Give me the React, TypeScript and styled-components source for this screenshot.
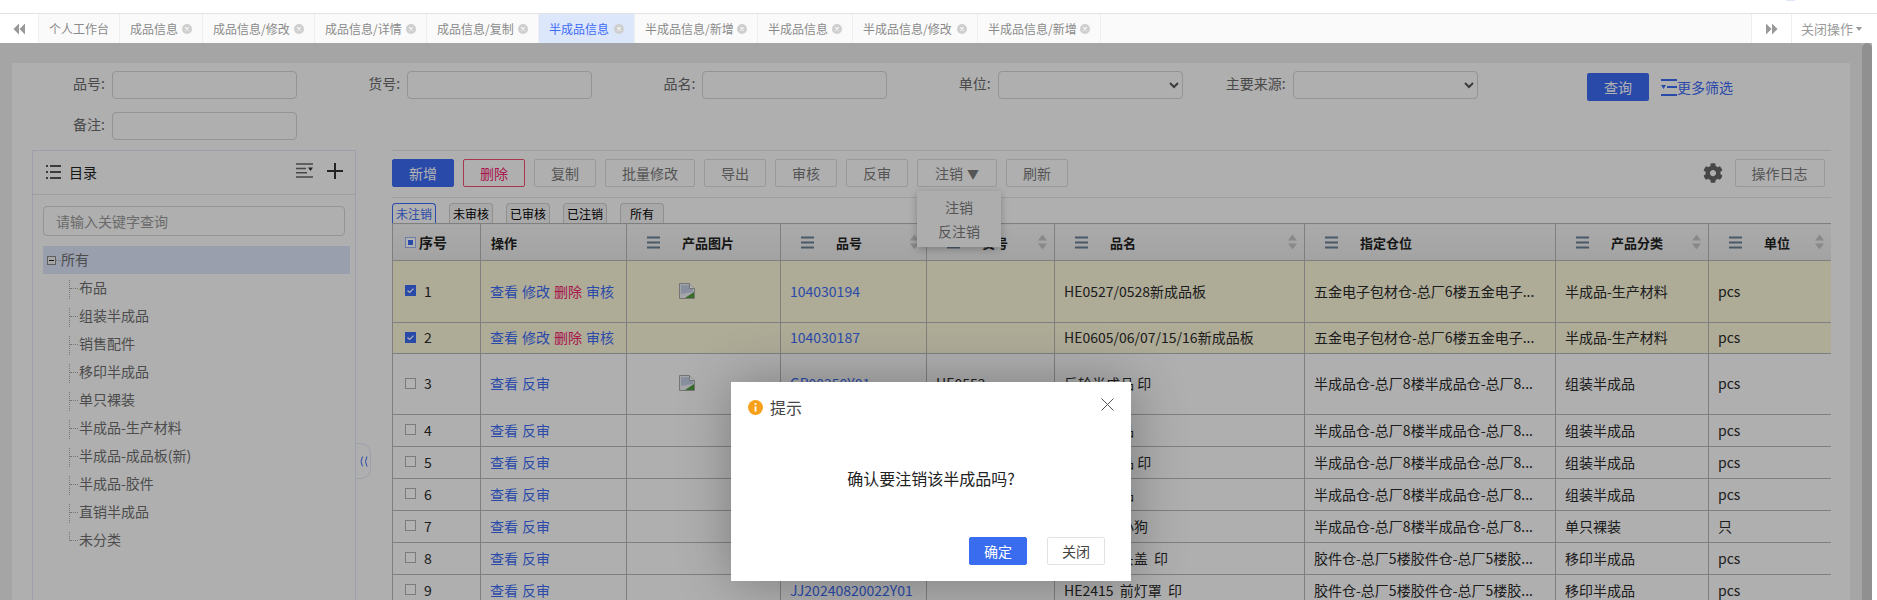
import styled, { createGlobalStyle } from "styled-components";
import { FaCog } from "react-icons/fa";

type Row = {
  no: number;
  height: number;
  checked?: boolean;
  hasImage?: boolean;
  actions: string[];
  code: string;
  article: string;
  name: string;
  location: string;
  category: string;
  unit: string;
};

const tabs = [
  { label: "个人工作台", width: 81, fixed: true },
  { label: "成品信息", width: 83 },
  { label: "成品信息/修改", width: 112 },
  { label: "成品信息/详情", width: 112 },
  { label: "成品信息/复制", width: 112 },
  { label: "半成品信息", width: 96, active: true },
  { label: "半成品信息/新增", width: 123 },
  { label: "半成品信息", width: 95 },
  { label: "半成品信息/修改", width: 125 },
  { label: "半成品信息/新增", width: 123 },
];

const treeItems = ["布品", "组装半成品", "销售配件", "移印半成品", "单只裸装", "半成品-生产材料", "半成品-成品板(新)", "半成品-胶件", "直销半成品", "未分类"];
const toolButtons = ["复制", "批量修改", "导出", "审核", "反审"];
const statusTabs = ["未注销", "未审核", "已审核", "已注销", "所有"];

const metalStore = "五金电子包材仓-总厂6楼五金电子...";
const semiStore = "半成品仓-总厂8楼半成品仓-总厂8...";
const glueStore = "胶件仓-总厂5楼胶件仓-总厂5楼胶...";
const fullActions = ["查看", "修改", "删除", "审核"];
const backActions = ["查看", "反审"];

const rows: Row[] = [
  { no: 1, height: 62, checked: true, hasImage: true, actions: fullActions, code: "104030194", article: "", name: "HE0527/0528新成品板", location: metalStore, category: "半成品-生产材料", unit: "pcs" },
  { no: 2, height: 31, checked: true, actions: fullActions, code: "104030187", article: "", name: "HE0605/06/07/15/16新成品板", location: metalStore, category: "半成品-生产材料", unit: "pcs" },
  { no: 3, height: 61, hasImage: true, actions: backActions, code: "GP00250Y01", article: "HE0552", name: "反轮半成品 印", location: semiStore, category: "组装半成品", unit: "pcs" },
  { no: 4, height: 32, actions: backActions, code: "GP00251Y01", article: "HE0552", name: "反轮半成品", location: semiStore, category: "组装半成品", unit: "pcs" },
  { no: 5, height: 32, actions: backActions, code: "GP00252Y01", article: "HE0553", name: "反轮半成品 印", location: semiStore, category: "组装半成品", unit: "pcs" },
  { no: 6, height: 32, actions: backActions, code: "GP00253Y01", article: "HE0553", name: "反轮半成品", location: semiStore, category: "组装半成品", unit: "pcs" },
  { no: 7, height: 32, actions: backActions, code: "GP00254Y01", article: "HE0554", name: "反轮半成小狗", location: semiStore, category: "单只裸装", unit: "只" },
  { no: 8, height: 32, actions: backActions, code: "JJ20240820021Y01", article: "", name: "HE2415  头盖  印", location: glueStore, category: "移印半成品", unit: "pcs" },
  { no: 9, height: 32, actions: backActions, code: "JJ20240820022Y01", article: "", name: "HE2415  前灯罩  印", location: glueStore, category: "移印半成品", unit: "pcs" },
];

const columns = [
  { title: "产品图片", width: 154 },
  { title: "品号", width: 146, sortable: true },
  { title: "货号", width: 128, sortable: true },
  { title: "品名", width: 250, sortable: true },
  { title: "指定仓位", width: 251 },
  { title: "产品分类", width: 153, sortable: true },
  { title: "单位", width: 122, sortable: true },
];

export default function App() {
  return (
    <Page>
      <GlobalStyle />
      <TopBar>
        <TopDot />
      </TopBar>

      <TabBar>
        <ArrowTab aria-label="prev">
          <DoubleArrow />
        </ArrowTab>
        {tabs.map((tab, i) => (
          <Tab key={i} $active={tab.active} $width={tab.width}>
            {tab.label}
            {!tab.fixed && <CloseDot />}
          </Tab>
        ))}
        <TabSpacer />
        <ArrowTab aria-label="next" $next>
          <DoubleArrow flip />
        </ArrowTab>
        <CloseMenu>
          关闭操作
          <Caret />
        </CloseMenu>
      </TabBar>

      <Body>
        <Main>
          <Panel>
            <SearchForm>
              <SearchGrid>
                <Field><FieldLabel>品号:</FieldLabel><TextInput /></Field>
                <Field><FieldLabel>货号:</FieldLabel><TextInput /></Field>
                <Field><FieldLabel>品名:</FieldLabel><TextInput /></Field>
                <Field><FieldLabel>单位:</FieldLabel><SelectInput><option /></SelectInput></Field>
                <Field><FieldLabel>主要来源:</FieldLabel><SelectInput><option /></SelectInput></Field>
                <Field><FieldLabel>备注:</FieldLabel><TextInput /></Field>
              </SearchGrid>
              <QueryButton>查询</QueryButton>
              <MoreFilter>
                <MoreIcon />
                更多筛选
              </MoreFilter>
            </SearchForm>

            <Content>
              <Sidebar>
                <SidebarHead>
                  <ListIcon />
                  <SidebarTitle>目录</SidebarTitle>
                  <SortLinesIcon />
                  <PlusIcon />
                </SidebarHead>
                <TreeSearch placeholder="请输入关键字查询" />
                <Tree>
                  <TreeRoot>
                    <Expander />
                    <RootDots />
                    <RootLabel>所有</RootLabel>
                  </TreeRoot>
                  {treeItems.map((item, i) => (
                    <TreeItem key={item} $last={i === treeItems.length - 1}>{item}</TreeItem>
                  ))}
                </Tree>
                <CollapseHandle>
                  <CollapseIcon />
                </CollapseHandle>
              </Sidebar>

              <TableArea>
                <Toolbar>
                  <ToolButton $variant="primary">新增</ToolButton>
                  <ToolButton $variant="danger">删除</ToolButton>
                  {toolButtons.map((label) => (
                    <ToolButton key={label} $wide={label.length > 2}>{label}</ToolButton>
                  ))}
                  <DropdownWrap>
                    <ToolButton $menu>注销<MenuTriangle>▼</MenuTriangle></ToolButton>
                    <DropdownMenu>
                      <DropdownItem>注销</DropdownItem>
                      <DropdownItem>反注销</DropdownItem>
                    </DropdownMenu>
                  </DropdownWrap>
                  <ToolButton>刷新</ToolButton>
                  <ToolbarRight>
                    <GearButton><FaCog size={20} /></GearButton>
                    <ToolButton $wide>操作日志</ToolButton>
                  </ToolbarRight>
                </Toolbar>

                <StatusTabs>
                  {statusTabs.map((label, i) => (
                    <StatusTab key={label} $active={i === 0}>{label}</StatusTab>
                  ))}
                </StatusTabs>

                <DataTable>
                  <colgroup>
                    <col width={88} />
                    <col width={146} />
                    {columns.map((c) => <col key={c.title} width={c.width} />)}
                  </colgroup>
                  <thead>
                    <tr>
                      <HeadCell>
                        <NoHead>
                          <CheckBox $state="some" />
                          序号
                        </NoHead>
                      </HeadCell>
                      <HeadCell><ActionHead>操作</ActionHead></HeadCell>
                      {columns.map((c) => (
                        <HeadCell key={c.title}>
                          <HeadInner>
                            <MenuBars />
                            {c.title}
                            {c.sortable && <SortArrows />}
                          </HeadInner>
                        </HeadCell>
                      ))}
                    </tr>
                  </thead>
                  <tbody>
                    {rows.map((row) => (
                      <DataRow key={row.no} $checked={row.checked}>
                        <Cell style={{ height: row.height }}>
                          <NoCell>
                            <CheckBox $state={row.checked ? "on" : "off"}>
                              {row.checked && <CheckMark />}
                            </CheckBox>
                            {row.no}
                          </NoCell>
                        </Cell>
                        <Cell>
                          <Actions>
                            {row.actions.map((a) => (
                              <ActionLink key={a} $danger={a === "删除"}>{a}</ActionLink>
                            ))}
                          </Actions>
                        </Cell>
                        <Cell>{row.hasImage && <ImageSlot><BrokenImage /></ImageSlot>}</Cell>
                        <Cell><CodeLink>{row.code}</CodeLink></Cell>
                        <Cell>{row.article}</Cell>
                        <Cell>{row.name}</Cell>
                        <Cell>{row.location}</Cell>
                        <Cell>{row.category}</Cell>
                        <LastCell>{row.unit}</LastCell>
                      </DataRow>
                    ))}
                  </tbody>
                </DataTable>
              </TableArea>
            </Content>
          </Panel>
        </Main>
        <ScrollThumb />
        <Overlay />
        <Dialog>
          <DialogHead>
            <InfoIcon />
            <DialogTitle>提示</DialogTitle>
            <DialogClose />
          </DialogHead>
          <DialogBody>确认要注销该半成品吗?</DialogBody>
          <DialogFoot>
            <DialogButton $primary>确定</DialogButton>
            <DialogButton>关闭</DialogButton>
          </DialogFoot>
        </Dialog>
      </Body>
    </Page>
  );
}

/* иконки */

const DoubleArrow = ({ flip }: { flip?: boolean }) => (
  <svg width="12" height="12" viewBox="0 0 12 12" style={flip ? { transform: "scaleX(-1)" } : undefined}>
    <path d="M6 0.5 L0.5 6 L6 11.5 Z M12 0.5 L6.5 6 L12 11.5 Z" fill="#999" />
  </svg>
);

const CloseDot = () => (
  <svg width="10" height="10" viewBox="0 0 10 10">
    <circle cx="5" cy="5" r="5" fill="#cfcfcf" />
    <path d="M3.4 3.4 L6.6 6.6 M6.6 3.4 L3.4 6.6" stroke="#fff" strokeWidth="1.1" />
  </svg>
);

const MoreIcon = () => (
  <svg width="16" height="17" viewBox="0 0 16 17">
    <path d="M0 1 H16 M0 16 H16 M6 8 H16" stroke="#3c6bf3" strokeWidth="2" fill="none" />
    <path d="M0 6 H5 L2.5 10 Z" fill="#3c6bf3" />
  </svg>
);

const ListIcon = () => (
  <svg width="15" height="14" viewBox="0 0 15 14">
    <path d="M0 1 H2 M4 1 H15 M0 7 H2 M4 7 H15 M0 13 H2 M4 13 H15" stroke="#222" strokeWidth="1.4" />
  </svg>
);

const SortLinesIcon = () => (
  <svg width="17" height="15" viewBox="0 0 17 15">
    <path d="M0 1 H17 M0 14 H17 M0 5.5 H10 M0 9.8 H11" stroke="#666" strokeWidth="1.5" />
    <path d="M12 4.5 H17 L14.5 8 Z" fill="#333" />
  </svg>
);

const PlusIcon = () => (
  <svg width="16" height="16" viewBox="0 0 16 16">
    <path d="M0 8 H16 M8 0 V16" stroke="#333" strokeWidth="2" />
  </svg>
);

const CollapseIcon = () => (
  <svg width="9" height="11" viewBox="0 0 9 11">
    <path d="M3.5 0.5 Q0.5 5.5 3.5 10.5 M8 0.5 Q5 5.5 8 10.5" stroke="#3c6bf3" strokeWidth="1" fill="none" />
  </svg>
);

const MenuBars = () => (
  <svg width="13" height="13" viewBox="0 0 13 13">
    <path d="M0 1.5 H13 M0 6.5 H13 M0 11.5 H13" stroke="#6b8096" strokeWidth="2.2" />
  </svg>
);

const SortArrows = () => (
  <SortWrap>
    <svg width="9" height="15" viewBox="0 0 9 15">
      <path d="M4.5 0 L9 6 H0 Z M4.5 15 L9 9 H0 Z" fill="#c4c4c4" />
    </svg>
  </SortWrap>
);

const CheckMark = () => (
  <svg width="9" height="9" viewBox="0 0 9 9">
    <path d="M1.5 4.5 L3.7 6.4 L7.5 2.6" stroke="#fff" strokeWidth="1.2" fill="none" />
  </svg>
);

const BrokenImage = () => (
  <svg width="16" height="16" viewBox="0 0 16 16">
    <path d="M0.5 0.5 H10.5 L15.5 5.5 V15.5 H0.5 Z" fill="#eceef2" stroke="#a8a8a8" />
    <path d="M2 2 H10 L14 6 V9 L2 11 Z" fill="#c3cfe4" />
    <path d="M6 15 L15 9 V15 Z" fill="#4f9a3c" />
    <path d="M10.5 0.5 V5.5 H15.5" fill="#fff" stroke="#a8a8a8" />
  </svg>
);

const InfoIcon = () => (
  <svg width="15" height="15" viewBox="0 0 15 15">
    <circle cx="7.5" cy="7.5" r="7.5" fill="#f7a11b" />
    <path d="M7.5 6.4 V11.6" stroke="#fff" strokeWidth="1.8" />
    <circle cx="7.5" cy="4" r="1.1" fill="#fff" />
  </svg>
);

const DialogClose = () => (
  <CloseWrap>
    <svg width="13" height="13" viewBox="0 0 13 13">
      <path d="M0.5 0.5 L12.5 12.5 M12.5 0.5 L0.5 12.5" stroke="#555" strokeWidth="1" />
    </svg>
  </CloseWrap>
);

/* стили */

const GlobalStyle = createGlobalStyle`
  * {
    box-sizing: border-box;
  }

  html, body {
    margin: 0;
    padding: 0;
    background: #fff;
  }

  body {
    font-family: "Noto Sans CJK SC", "Liberation Sans", sans-serif;
    font-size: 14px;
    color: #333;
  }
`;

const Page = styled.div`
  width: 1877px;
  height: 600px;
  display: flex;
  flex-direction: column;
  overflow: hidden;
  background: #fff;
`;

const TopBar = styled.div`
  height: 13px;
  display: flex;
  justify-content: flex-end;
  padding-right: 82px;
  background: #fff;
`;

const TopDot = styled.div`
  width: 9px;
  height: 1px;
  background: #dfe6fa;
`;

const TabBar = styled.div`
  height: 30px;
  display: flex;
  background: #fafafa;
  border-top: 1px solid #e2e2e2;
  font-size: 12px;
  line-height: 29px;
  color: #8a8a8a;
`;

const ArrowTab = styled.div<{ $next?: boolean }>`
  width: ${(p) => (p.$next ? "41px" : "39px")};
  display: flex;
  align-items: center;
  justify-content: center;
  background: #fff;
  border-right: 1px solid #eee;
  border-left: ${(p) => (p.$next ? "1px solid #eee" : "none")};
`;

const Tab = styled.div<{ $active?: boolean; $width: number }>`
  width: ${(p) => p.$width}px;
  display: flex;
  align-items: center;
  justify-content: space-between;
  padding: 0 10px;
  border-right: 1px solid #eee;
  white-space: nowrap;
  background: ${(p) => (p.$active ? "#dde7fb" : "transparent")};
  color: ${(p) => (p.$active ? "#3c6bf3" : "#8a8a8a")};
`;

const TabSpacer = styled.div`
  flex: 1;
`;

const CloseMenu = styled.div`
  width: 85px;
  display: flex;
  align-items: center;
  gap: 3px;
  padding-left: 9px;
  font-size: 13px;
  color: #9a9a9a;
  background: #fff;
`;

const Caret = styled.span`
  width: 0;
  height: 0;
  border-left: 3.5px solid transparent;
  border-right: 3.5px solid transparent;
  border-top: 4px solid #999;
`;

const Body = styled.div`
  position: relative;
  flex: 1;
  display: flex;
  min-height: 0;
`;

const Main = styled.div`
  width: 1862px;
  height: 557px;
  padding: 20px 12px 0;
  background: #ececec;
  overflow: hidden;
`;

const ScrollThumb = styled.div`
  width: 10px;
  background: #cfcfcf;
  border-radius: 5px 5px 0 0;
`;

const Overlay = styled.div`
  position: absolute;
  left: 0;
  top: 0;
  z-index: 5;
  width: 1872px;
  height: 100%;
  background: rgba(0, 0, 0, 0.3);
`;

const Panel = styled.div`
  width: 1838px;
  min-height: 537px;
  background: #fbfbfb;
`;

const SearchForm = styled.div`
  display: flex;
  align-items: flex-start;
  padding: 8px 0 0;
`;

const SearchGrid = styled.div`
  display: grid;
  grid-template-columns: repeat(5, 295.2px);
  row-gap: 13px;
`;

const Field = styled.div`
  display: flex;
  align-items: center;
  justify-content: flex-end;
  gap: 7px;
  height: 28px;
  width: 285px;
`;

const FieldLabel = styled.label`
  padding-bottom: 4px;
  font-size: 14px;
  color: #6a6a6a;
  white-space: nowrap;
`;

const TextInput = styled.input`
  width: 185px;
  height: 28px;
  background: transparent;
  border: 1px solid #d4d4d4;
  border-radius: 4px;
`;

const SelectInput = styled.select`
  width: 185px;
  height: 28px;
  background: transparent;
  border: 1px solid #d4d4d4;
  border-radius: 4px;
  color: #555;
`;

const QueryButton = styled.button`
  width: 62px;
  height: 28px;
  margin: 2px 0 0 99px;
  border: none;
  border-radius: 2px;
  background: #3c6bf3;
  color: #fff;
  font: inherit;
  font-size: 14px;
`;

const MoreFilter = styled.a`
  display: flex;
  align-items: center;
  height: 28px;
  margin: 2px 0 0 12px;
  font-size: 14px;
  color: #3c6bf3;
  white-space: nowrap;
`;

const Content = styled.div`
  display: flex;
  align-items: flex-start;
  gap: 36px;
  padding: 10px 20px 0;
`;

const Sidebar = styled.aside`
  position: relative;
  flex: 0 0 324px;
  min-width: 0;
  height: 500px;
  border: 1px solid #dfe6f5;
  padding: 0 10px;
`;

const SidebarHead = styled.div`
  display: flex;
  align-items: center;
  height: 44px;
  margin: 0 -10px;
  padding: 0 12px 2px 13px;
  border-bottom: 1px solid #e4e4e4;

  & > svg:last-child {
    margin-left: 14px;
    margin-top: -2px;
  }

  & > svg:nth-last-child(2) {
    margin-top: -2px;
  }
`;

const SidebarTitle = styled.span`
  flex: 1;
  margin-left: 8px;
  font-size: 14px;
  color: #222;
`;

const TreeSearch = styled.input`
  display: block;
  width: 302px;
  height: 30px;
  margin-top: 11px;
  padding: 0 12px;
  background: transparent;
  border: 1px solid #d4d4d4;
  border-radius: 4px;
  font: inherit;

  &::placeholder {
    color: #999;
  }
`;

const Tree = styled.div`
  margin-top: 10px;
  width: 307px;
  font-size: 14px;
  color: #6e6e6e;
`;

const TreeRoot = styled.div`
  height: 28px;
  display: flex;
  align-items: center;
  padding-left: 4px;
  background: #dde4fa;
`;

const RootLabel = styled.span`
  padding-bottom: 2px;
`;

const Expander = styled.span`
  position: relative;
  width: 9px;
  height: 9px;
  border: 1px solid #888;
  background: #eee;

  &::after {
    content: "";
    position: absolute;
    left: 1px;
    right: 1px;
    top: 3px;
    height: 1px;
    background: #222;
  }
`;

const RootDots = styled.span`
  width: 5px;
  margin-right: 0;
  border-top: 1px dotted #aaa;
`;

const TreeItem = styled.div<{ $last?: boolean }>`
  position: relative;
  height: 28px;
  line-height: 26px;
  padding-left: 36px;

  &::before {
    content: "";
    position: absolute;
    left: 26px;
    top: 6px;
    height: ${(p) => (p.$last ? "9px" : "19px")};
    border-left: 1px dotted #aaa;
  }

  &::after {
    content: "";
    position: absolute;
    left: 27px;
    top: 14px;
    width: 8px;
    border-top: 1px dotted #aaa;
  }
`;

const CollapseHandle = styled.div`
  position: absolute;
  right: -16px;
  top: 292px;
  width: 15px;
  height: 36px;
  display: flex;
  align-items: center;
  justify-content: center;
  background: #fbfbfb;
  border: 1px solid #dfe6f5;
  border-left: none;
  border-radius: 0 10px 10px 0;
`;

const TableArea = styled.div`
  flex: 0 0 1438px;
  border-top: 1px solid #e4e4e4;
`;

const Toolbar = styled.div`
  display: flex;
  align-items: center;
  gap: 9px;
  padding: 8px 6px 10px 0;
  border-bottom: 1px solid #e4e4e4;
`;

const ToolButton = styled.button<{ $variant?: "primary" | "danger"; $wide?: boolean; $menu?: boolean }>`
  width: ${(p) => (p.$menu ? "80px" : p.$wide ? "90px" : "62px")};
  height: 28px;
  padding: 0;
  font: inherit;
  font-size: 14px;
  border-radius: 2px;
  border: 1px solid
    ${(p) => (p.$variant === "primary" ? "#3c6bf3" : p.$variant === "danger" ? "#f0506e" : "#dcdcdc")};
  background: ${(p) => (p.$variant === "primary" ? "#3c6bf3" : "transparent")};
  color: ${(p) => (p.$variant === "primary" ? "#fff" : p.$variant === "danger" ? "#f2206e" : "#7a7a7a")};
`;

const MenuTriangle = styled.span`
  margin-left: 4px;
  font-size: 12px;
`;

const DropdownWrap = styled.div`
  position: relative;
  height: 28px;
`;

const DropdownMenu = styled.div`
  position: absolute;
  left: 0;
  top: 32px;
  z-index: 2;
  width: 84px;
  height: 56px;
  padding-top: 4px;
  background: #f8f8f8;
  box-shadow: 0 2px 8px rgba(0, 0, 0, 0.25);
`;

const DropdownItem = styled.div`
  height: 24px;
  line-height: 24px;
  text-align: center;
  font-size: 14px;
  color: #7a7a7a;
`;

const ToolbarRight = styled.div`
  margin-left: auto;
  display: flex;
  align-items: center;
  gap: 12px;
`;

const GearButton = styled.span`
  display: flex;
  color: #666;
`;

const StatusTabs = styled.div`
  display: flex;
  gap: 13px;
  height: 25px;
  padding-top: 5px;
`;

const StatusTab = styled.div<{ $active?: boolean }>`
  width: 44px;
  height: 20px;
  line-height: 19px;
  text-align: center;
  font-size: 12px;
  border: 1px solid ${(p) => (p.$active ? "#3c6bf3" : "#cfcfcf")};
  border-bottom: none;
  border-radius: 4px 4px 0 0;
  background: ${(p) => (p.$active ? "transparent" : "#f2f2f2")};
  color: ${(p) => (p.$active ? "#3c6bf3" : "#000")};
`;

const DataTable = styled.table`
  width: 1438px;
  table-layout: fixed;
  border-collapse: collapse;
  font-size: 14px;
`;

const HeadCell = styled.th`
  height: 37px;
  padding: 0;
  text-align: left;
  font-size: 13px;
  font-weight: 700;
  color: #222;
  border: 1px solid #b6b6b6;
  background: linear-gradient(to bottom, #f4f4f4, #e9e9e9);

  &:last-child {
    border-right: none;
  }
`;

const NoHead = styled.div`
  display: flex;
  align-items: center;
  gap: 3px;
  padding-left: 12px;
  font-size: 14px;
`;

const ActionHead = styled.div`
  padding-left: 10px;
`;

const HeadInner = styled.div`
  position: relative;
  display: flex;
  align-items: center;
  gap: 22px;
  padding-left: 20px;
  white-space: nowrap;
`;

const SortWrap = styled.span`
  position: absolute;
  right: 7px;
  top: 50%;
  display: flex;
  transform: translateY(-50%);
`;

const DataRow = styled.tr<{ $checked?: boolean }>`
  background: ${(p) => (p.$checked ? "#f9f5d8" : "transparent")};
`;

const Cell = styled.td`
  padding: 0 9px 2px;
  border: 1px solid #b6b6b6;
  line-height: 20px;
  color: #2a2a2a;
  white-space: pre;
  overflow: hidden;
`;

const LastCell = styled(Cell)`
  border-right: none;
`;

const NoCell = styled.div`
  display: flex;
  align-items: center;
  gap: 8px;
  padding-left: 3px;
`;

const CheckBox = styled.span<{ $state: "on" | "off" | "some" }>`
  position: relative;
  flex: none;
  display: flex;
  align-items: center;
  justify-content: center;
  width: 11px;
  height: 11px;
  border: 1px solid ${(p) => (p.$state === "on" ? "#3c6bf3" : p.$state === "some" ? "#a0b2ee" : "#b0b0b0")};
  background: ${(p) => (p.$state === "on" ? "#3c6bf3" : "#fff")};

  ${(p) => p.$state === "some" && "&::after { content: ''; width: 5px; height: 5px; background: #3c6bf3; }"}
`;

const Actions = styled.div`
  display: flex;
  gap: 4px;
`;

const ActionLink = styled.a<{ $danger?: boolean }>`
  color: ${(p) => (p.$danger ? "#f2206e" : "#3c6bf3")};
`;

const CodeLink = styled.a`
  color: #3c6bf3;
`;

const ImageSlot = styled.div`
  display: flex;
  padding-left: 43px;
`;

const Dialog = styled.div`
  position: absolute;
  left: 731px;
  top: 339px;
  z-index: 6;
  width: 400px;
  height: 199px;
  display: flex;
  flex-direction: column;
  background: #fff;
  box-shadow: 1px 1px 50px rgba(0, 0, 0, 0.3);
`;

const DialogHead = styled.div`
  display: flex;
  align-items: center;
  gap: 7px;
  height: 50px;
  padding: 0 17px;
`;

const DialogTitle = styled.span`
  font-size: 16px;
  color: #444;
`;

const CloseWrap = styled.span`
  display: flex;
  margin: -6px 0 0 auto;
`;

const DialogBody = styled.div`
  flex: 1;
  padding-top: 32px;
  text-align: center;
  font-size: 16px;
  line-height: 28px;
  color: #222;
`;

const DialogFoot = styled.div`
  display: flex;
  justify-content: flex-end;
  gap: 20px;
  padding: 0 26px 16px;
`;

const DialogButton = styled.button<{ $primary?: boolean }>`
  width: 58px;
  height: 28px;
  padding: 0;
  font: inherit;
  font-size: 14px;
  border-radius: 2px;
  border: 1px solid ${(p) => (p.$primary ? "#396cef" : "#e2e2e2")};
  background: ${(p) => (p.$primary ? "#396cef" : "#fff")};
  color: ${(p) => (p.$primary ? "#fff" : "#444")};
`;
